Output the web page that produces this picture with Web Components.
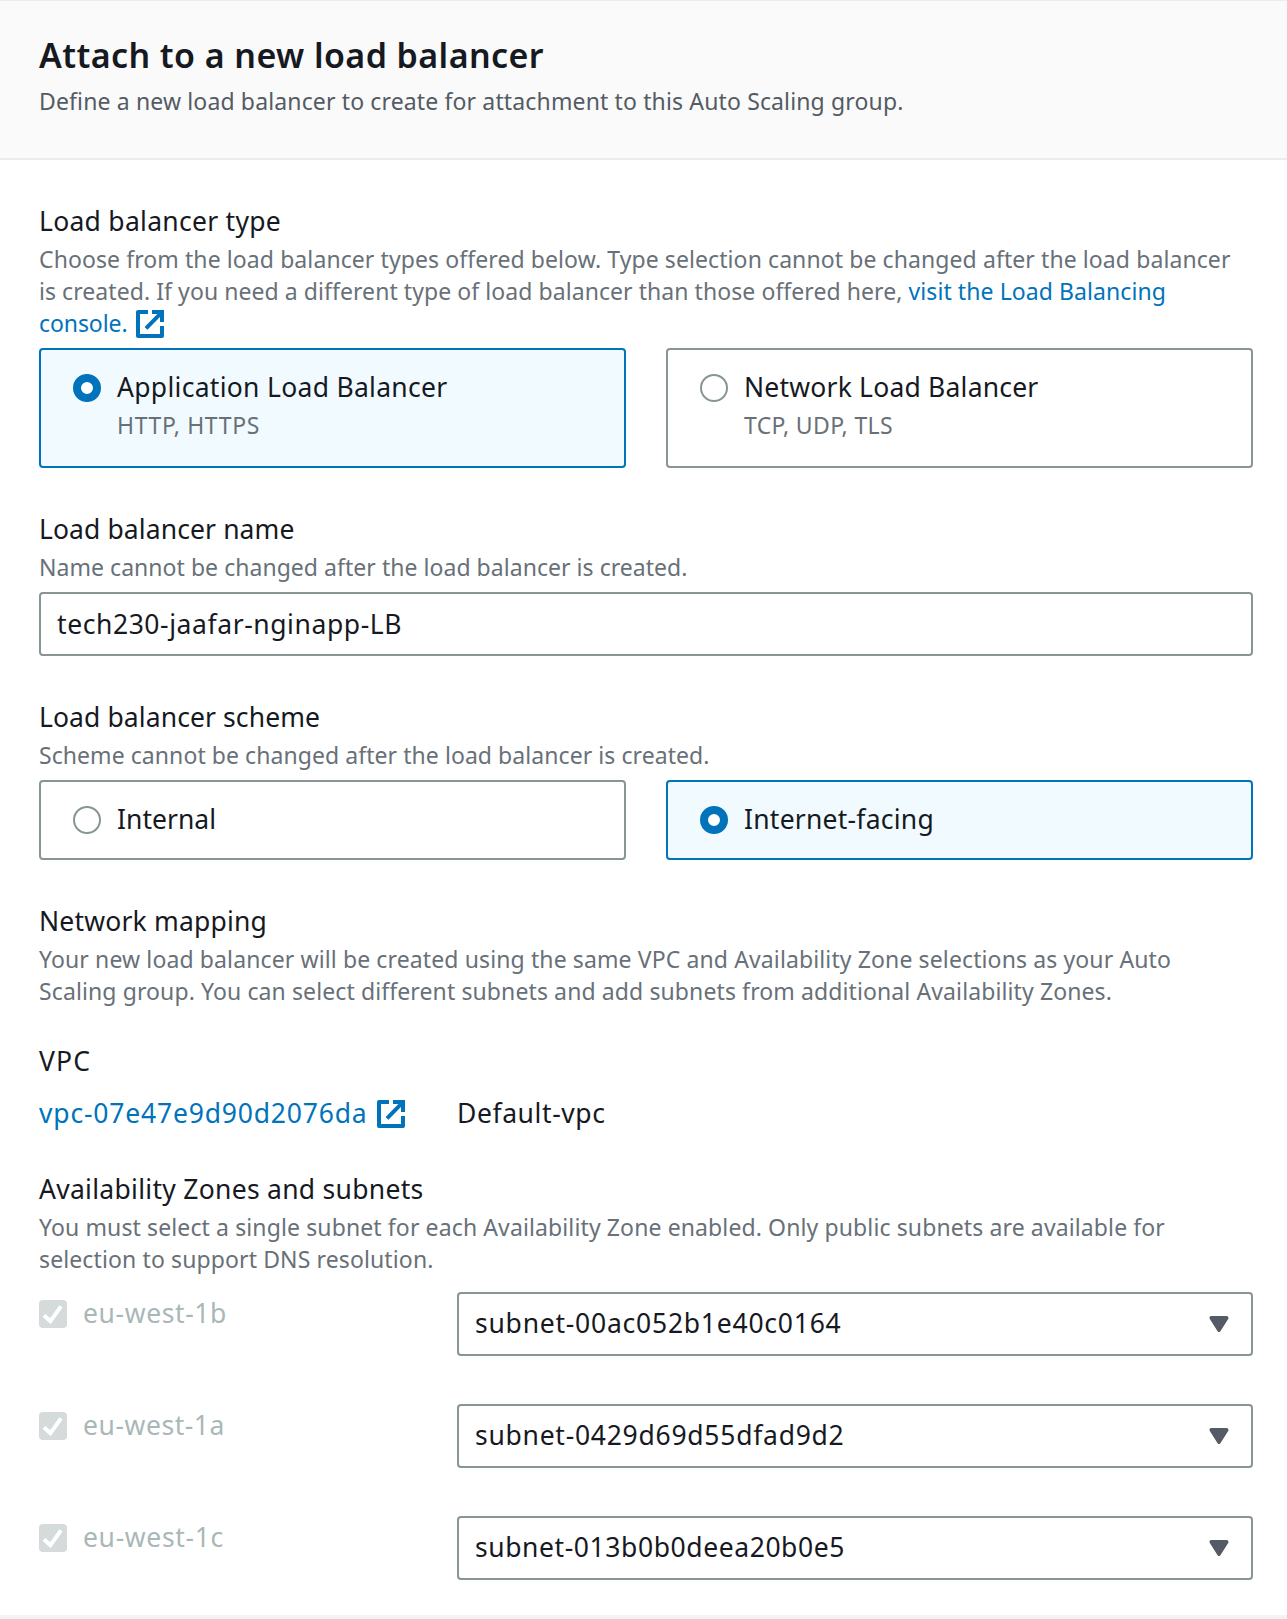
<!DOCTYPE html>
<html lang="en">
<head>
<meta charset="utf-8">
<title>Attach to a new load balancer</title>
<style>
html,body{margin:0;padding:0;background:#fff}
body{font-family:"Noto Sans","Open Sans",sans-serif;color:#16191f}
</style>
</head>
<body>
<lb-panel></lb-panel>
<script>
const define = (name, html, setup) => customElements.define(name, class extends HTMLElement {
  constructor() {
    super();
    this.attachShadow({mode: 'open'}).innerHTML = html;
  }
  connectedCallback() { if (setup) setup(this, this.shadowRoot); }
});

// One line of text, tracked so that it fills the width given in "w".
define('fit-text', `<style>
:host{display:inline-block;white-space:pre;vertical-align:top}
span{display:inline-block;white-space:pre}
</style><span><slot></slot></span>`, (el, root) => {
  const span = root.querySelector('span');
  const n = el.textContent.length;
  const want = parseFloat(el.getAttribute('w'));
  const have = span.getBoundingClientRect().width;
  el.style.letterSpacing = ((want + 0.5 - have) / n).toFixed(4) + 'px';
});

define('external-icon', `<style>
:host{display:block;width:28px;height:28px;flex:none;color:#0073bb}
svg{display:block}
</style><svg width="28" height="28" viewBox="0 0 28 28" fill="none" stroke="currentColor" stroke-width="4" stroke-linejoin="round">
<path d="M12 2H2V26H26V16M16 2H26V12" /><path stroke-linejoin="miter" d="M24 2H26V4M10 18.3L25 3.2"/></svg>`);

define('panel-header', `<style>
:host{display:block;box-sizing:border-box;height:160px;background:#fafafa;border-top:1px solid #eaeded;border-bottom:2px solid #eaeded;padding:30px 39px 0}
.t{font-size:34px;font-weight:600;line-height:48px;height:48px}
.d{font-size:23px;line-height:32px;color:#545b64;padding-top:6px}
</style><div class="t"><slot name="title"></slot></div><div class="d"><slot></slot></div>`);

define('form-field', `<style>
:host{display:block}
.l{font-size:26.5px;line-height:44px;height:44px}
.d{font-size:23px;line-height:32px;color:#687078}
.c{padding-top:var(--gap,9px)}
</style><div class="l"><slot name="label"></slot></div><div class="d"><slot name="hint"></slot></div><div class="c"><slot></slot></div>`);

define('hint-line', `<style>
:host{display:flex;height:32px;white-space:pre}
::slotted(.link){color:#0073bb}
::slotted(external-icon){margin:3px 0 0 8.5px}
</style><slot></slot>`);

define('radio-tile', `<style>
:host{display:flex;box-sizing:border-box;flex:1;height:120px;border:2px solid #879596;border-radius:4px;background:#fff;padding:15px 32px 0;gap:16px}
:host([compact]){height:80px}
:host([checked]){border-color:#0073bb;background:#f1faff}
i{display:block;box-sizing:border-box;width:28px;height:28px;border:2px solid #879596;border-radius:50%;margin-top:9px;flex:none;background:#fff}
:host([checked]) i{border:8px solid #0073bb}
.t{font-size:26.5px;line-height:44px;height:44px}
.d{font-size:23px;line-height:32px;color:#687078}
</style><i></i><div><div class="t"><slot></slot></div><div class="d"><slot name="detail"></slot></div></div>`);

define('tile-row', `<style>:host{display:flex;gap:40px}</style><slot></slot>`);

define('text-box', `<style>
:host{display:flex;justify-content:space-between;box-sizing:border-box;width:100%;height:64px;border:2px solid #879596;border-radius:4px;background:#fff;padding:8px 22px 0 16px;font-size:26.5px;line-height:44px}
:host([select]){padding-top:7px}
svg{display:none;margin-top:15px}
:host([select]) svg{display:block}
</style><div><slot></slot></div><svg width="20" height="16" viewBox="0 0 20 16"><path d="M2 2H18L10 14Z" fill="#545b64" stroke="#545b64" stroke-width="4" stroke-linejoin="round" transform="translate(.5 0) scale(.95 1)"/></svg>`);

define('zone-row', `<style>
:host{display:flex;height:64px}
.z{width:418px;flex:none;display:flex;gap:16px;font-size:26.5px;line-height:42px;color:#aab7b8}
.b{width:28px;height:28px;border-radius:4px;background:#d5dbdb;margin-top:8px}
svg{display:block}
::slotted(text-box){flex:1}
</style><div class="z"><div class="b"><svg width="28" height="28" viewBox="0 0 28 28"><path d="M5 15.2L11.4 21.2L22 6.4" fill="none" stroke="#fff" stroke-width="4"/></svg></div><div class="n"><slot name="zone"></slot></div></div><slot></slot>`);

define('vpc-row', `<style>
:host{display:flex;font-size:26.5px;line-height:44px;height:44px}
.a{width:418px;display:flex;color:#0073bb;gap:9.5px}
external-icon{margin-top:9px}
</style><div class="a"><slot name="id"></slot><external-icon></external-icon></div><slot></slot>`);

define('lb-panel', `<style>
:host{display:flex;flex-direction:column;height:1619px;box-sizing:border-box;border-bottom:4px solid #f2f3f3;background:#fff}
main{display:flex;flex-direction:column;padding:39px 34px 0 39px;gap:39px}
.net{--gap:0px}
.vpc{font-size:26.5px;line-height:44px;display:flex;flex-direction:column;gap:8px}
.az{--gap:17px}
.rows{display:flex;flex-direction:column;gap:48px}
.s{display:flex;flex-direction:column;gap:32px}
</style>
<panel-header><fit-text slot="title" w="504.5">Attach to a new load balancer</fit-text><fit-text w="864">Define a new load balancer to create for attachment to this Auto Scaling group.</fit-text></panel-header>
<main>
<form-field><fit-text slot="label" w="241.5">Load balancer type</fit-text>
<div slot="hint"><hint-line><fit-text w="1191">Choose from the load balancer types offered below. Type selection cannot be changed after the load balancer</fit-text></hint-line><hint-line><fit-text w="869">is created. If you need a different type of load balancer than those offered here, </fit-text><fit-text class="link" w="257">visit the Load Balancing</fit-text></hint-line><hint-line><fit-text class="link" w="88">console.</fit-text><external-icon></external-icon></hint-line></div>
<tile-row><radio-tile checked><fit-text w="330">Application Load Balancer</fit-text><fit-text slot="detail" w="142.6">HTTP, HTTPS</fit-text></radio-tile><radio-tile><fit-text w="294">Network Load Balancer</fit-text><fit-text slot="detail" w="148.5">TCP, UDP, TLS</fit-text></radio-tile></tile-row>
</form-field>
<form-field><fit-text slot="label" w="255">Load balancer name</fit-text><fit-text slot="hint" w="648">Name cannot be changed after the load balancer is created.</fit-text>
<text-box><fit-text w="344.5">tech230-jaafar-nginapp-LB</fit-text></text-box></form-field>
<form-field><fit-text slot="label" w="280.6">Load balancer scheme</fit-text><fit-text slot="hint" w="670">Scheme cannot be changed after the load balancer is created.</fit-text>
<tile-row><radio-tile compact><fit-text w="98.5">Internal</fit-text></radio-tile><radio-tile compact checked><fit-text w="189.5">Internet-facing</fit-text></radio-tile></tile-row></form-field>
<div class="s">
<form-field class="net"><fit-text slot="label" w="227.5">Network mapping</fit-text><div slot="hint"><hint-line><fit-text w="1131.5">Your new load balancer will be created using the same VPC and Availability Zone selections as your Auto</fit-text></hint-line><hint-line><fit-text w="1072.5">Scaling group. You can select different subnets and add subnets from additional Availability Zones.</fit-text></hint-line></div></form-field>
<div class="vpc"><div><fit-text w="51.5">VPC</fit-text></div><vpc-row><fit-text slot="id" w="328">vpc-07e47e9d90d2076da</fit-text><fit-text w="148">Default-vpc</fit-text></vpc-row></div>
<form-field class="az"><fit-text slot="label" w="384">Availability Zones and subnets</fit-text><div slot="hint"><hint-line><fit-text w="1125.5">You must select a single subnet for each Availability Zone enabled. Only public subnets are available for</fit-text></hint-line><hint-line><fit-text w="394">selection to support DNS resolution.</fit-text></hint-line></div>
<div class="rows">
<zone-row><fit-text slot="zone" w="143.5">eu-west-1b</fit-text><text-box select><fit-text w="366">subnet-00ac052b1e40c0164</fit-text></text-box></zone-row>
<zone-row><fit-text slot="zone" w="141.5">eu-west-1a</fit-text><text-box select><fit-text w="369">subnet-0429d69d55dfad9d2</fit-text></text-box></zone-row>
<zone-row><fit-text slot="zone" w="140.5">eu-west-1c</fit-text><text-box select><fit-text w="369.5">subnet-013b0b0deea20b0e5</fit-text></text-box></zone-row>
</div></form-field>
</div>
</main>`);
</script>
</body>
</html>
